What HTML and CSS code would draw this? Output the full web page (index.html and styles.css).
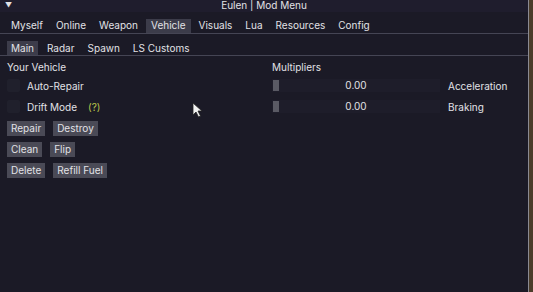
FILE: index.html
```html
<!DOCTYPE html>
<html lang="en">
<head>
  <meta charset="UTF-8" />
  <title>Eulen | Mod Menu</title>
  <link rel="stylesheet" href="styles.css">
</head>
<body>
  <div class="window">
    <div class="titlebar">
      <span class="arrow">&#9660;</span>
      <span class="title">Eulen | Mod Menu</span>
    </div>

    <nav class="tabs">
      <span class="tab">Myself</span>
      <span class="tab">Online</span>
      <span class="tab">Weapon</span>
      <span class="tab active">Vehicle</span>
      <span class="tab">Visuals</span>
      <span class="tab">Lua</span>
      <span class="tab">Resources</span>
      <span class="tab">Config</span>
    </nav>

    <nav class="subtabs">
      <span class="tab active">Main</span>
      <span class="tab">Radar</span>
      <span class="tab">Spawn</span>
      <span class="tab">LS Customs</span>
    </nav>

    <section class="content">
      <div class="col left">
        <div class="heading">Your Vehicle</div>
        <div class="check"><span class="box"></span>Auto-Repair</div>
        <div class="check"><span class="box"></span>Drift Mode <span class="help">(?)</span></div>
        <div class="buttons">
          <div class="btnrow">
            <button>Repair</button>
            <button>Destroy</button>
          </div>
          <div class="btnrow">
            <button>Clean</button>
            <button>Flip</button>
          </div>
          <div class="btnrow">
            <button>Delete</button>
            <button>Refill Fuel</button>
          </div>
        </div>
      </div>

      <div class="col right">
        <div class="heading">Multipliers</div>
        <div class="slider">
          <div class="track"><span class="grab"></span><span class="val">0.00</span></div>
          <span class="label">Acceleration</span>
        </div>
        <div class="slider">
          <div class="track"><span class="grab"></span><span class="val">0.00</span></div>
          <span class="label">Braking</span>
        </div>
      </div>
    </section>

    <svg class="cursor" width="12" height="16" viewBox="0 0 12 16">
      <path d="M1 1 L1 13 L4 10 L6.5 15 L8.5 14 L6 9 L10 9 Z" fill="#f2f2f2" stroke="#222" stroke-width="0.8"/>
    </svg>
  </div>
</body>
</html>
```

FILE: styles.css
```css
body {
  margin: 0;
  background: #4b3d2a;
  font-family: 'Inter', 'Liberation Sans', sans-serif;
  font-size: 10px;
  color: #e2e2e6;
}
.window {
  position: relative;
  width: 529px;
  height: 292px;
  background: #1b1a26;
  border-right: 1px solid #8a8a92;
  box-sizing: border-box;
}
.titlebar {
  position: relative;
  height: 12px;
  line-height: 11px;
  background: #1f1d2d;
  text-align: center;
}
.titlebar .arrow {
  position: absolute;
  left: 5px;
  top: 0;
  font-size: 7px;
}
.tabs, .subtabs {
  display: flex;
  align-items: flex-end;
  padding: 0 6px;
  border-bottom: 1px solid #454554;
}
.tabs {
  gap: 3px;
  height: 21px;
}
.subtabs {
  gap: 5px;
  height: 21px;
  padding-left: 7px;
}
.tab {
  padding: 0 5px;
  height: 14px;
  line-height: 13px;
}
.subtabs .tab {
  padding: 0 4px;
  height: 14px;
  line-height: 14px;
}
.tab.active {
  background: #3c3c4a;
}
.content {
  display: flex;
  padding: 5px 7px;
}
.col.left {
  width: 265px;
}
.heading {
  height: 13px;
  line-height: 13px;
  margin-bottom: 1px;
}
.check {
  display: flex;
  align-items: center;
  height: 21px;
  gap: 7px;
}
.box {
  width: 13px;
  height: 13px;
  background: #20202c;
  border-radius: 2px;
}
.help {
  color: #b9c24a;
  margin-left: 4px;
}
.buttons {
  display: flex;
  flex-direction: column;
  gap: 6px;
  margin-top: 4px;
}
.btnrow {
  display: flex;
  gap: 8px;
  height: 15px;
}
button {
  font-family: inherit;
  font-size: 10px;
  color: #e2e2e6;
  background: #4a4a56;
  border: none;
  padding: 0 4px;
  height: 15px;
  line-height: 15px;
  cursor: pointer;
}
.slider {
  display: flex;
  align-items: center;
  height: 21px;
  gap: 8px;
}
.track {
  position: relative;
  width: 168px;
  height: 13px;
  background: #1e1d2a;
  text-align: center;
  line-height: 13px;
}
.grab {
  position: absolute;
  left: 1px;
  top: 1px;
  width: 6px;
  height: 11px;
  background: #5a5a64;
}
.cursor {
  position: absolute;
  left: 192px;
  top: 102px;
}
```
